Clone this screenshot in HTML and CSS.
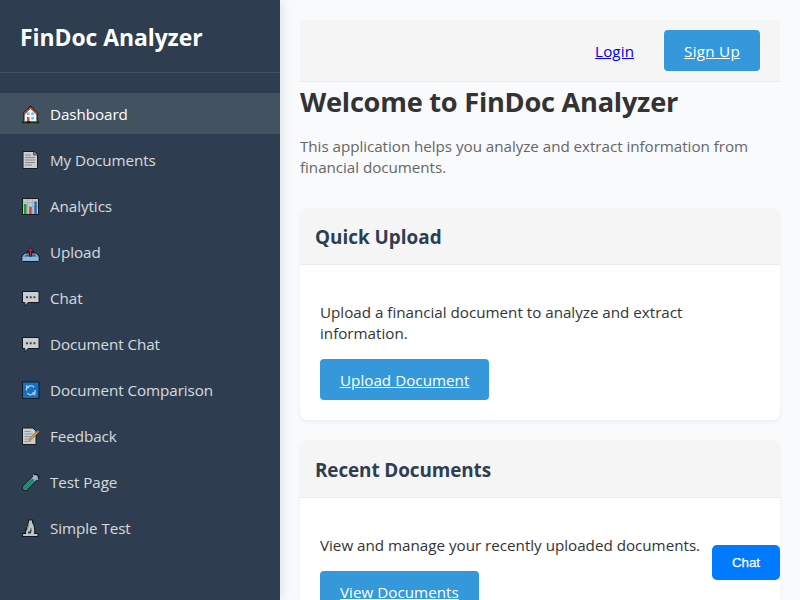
FILE: index.html
```html
<!DOCTYPE html>
<html lang="en">
<head>
<meta charset="utf-8">
<title>FinDoc Analyzer</title>
<link rel="stylesheet" href="styles.css">
</head>
<body>
<div class="layout">
  <aside class="sidebar">
    <div class="brand">FinDoc Analyzer</div>
    <nav class="nav">
      <a class="nav-item active">
        <svg class="icon" viewBox="0 0 20 21"><path d="M4 10h13v9H4z" fill="#f4f4f4" stroke="#111" stroke-width="1"/><path d="M3 11.500 10.500 4l7.500 7.500" fill="#f4f4f4" stroke="#111" stroke-width="2.200"/><path d="M3.600 11 10.500 4.500 17.400 11" fill="none" stroke="#e2502f" stroke-width="1.100"/><path d="M7 9.500h2.500V12H7zM11.300 9.500h2.500V12h-2.500zM11.300 14h2.500v2.500h-2.500z" fill="#4cc8f5"/><path d="M7 14h2.500v5H7z" fill="#e8452c"/><path d="M2 18.200h17v2H2z" fill="#111"/><path d="M3.500 18h3.300v1.200H3.500zM10 18h7.500v1.200H10z" fill="#1fa32a"/></svg>
        <span>Dashboard</span></a>
      <a class="nav-item">
        <svg class="icon" viewBox="0 0 20 21"><path d="M3 2.500h11l3.500 3v14H3z" fill="#f2f2f2" stroke="#111"/><path d="M13.500 3v3h3.500" fill="#999" stroke="#444" stroke-width=".8"/><path d="M5 6h6M5 8.500h10M5 11h10M5 13.500h10M5 16h7" stroke="#9a9a9a" stroke-width="1.100"/></svg>
        <span>My Documents</span></a>
      <a class="nav-item">
        <svg class="icon" viewBox="0 0 20 21"><path d="M2.500 3.500h16v16h-16z" fill="#e9e9ef" stroke="#111"/><path d="M3 7.500h15M3 11.500h15M7.500 4v15M12.500 4v15" stroke="#c2c2cc" stroke-width=".7"/><path d="M4 9h2.500v10H4z" fill="#1db427"/><path d="M9.200 12h2.500v7H9.200z" fill="#e8492e"/><path d="M14.300 6.500h2.500V19h-2.500z" fill="#1479d2"/></svg>
        <span>Analytics</span></a>
      <a class="nav-item">
        <svg class="icon" viewBox="0 0 20 21"><path d="M5 12h11l3 3v4.500l-1 1H3l-1-1V15z" fill="#8dc8f2" stroke="#111"/><path d="M2.600 16h15.800v3.800H2.600z" fill="#a9daf8"/><path d="M6 13.500h9l1.500 2h-12z" fill="#2c6fa8"/><path d="M10.500 15.500V9" stroke="#111" stroke-width="3"/><path d="M7 10.500 10.500 6.500 14 10.500z" fill="#d2223c" stroke="#111" stroke-width=".9"/><path d="M10.500 15V9" stroke="#d2223c" stroke-width="1.400"/></svg>
        <span>Upload</span></a>
      <a class="nav-item">
        <svg class="icon" viewBox="0 0 20 21"><path d="M2.500 4.500h16.500v11H8L4.800 19v-3.500H2.500z" fill="#f2f2f4" stroke="#111"/><path d="M6 9.200h2v2H6zM9.700 9.200h2v2h-2zM13.400 9.200h2v2h-2z" fill="#444"/></svg>
        <span>Chat</span></a>
      <a class="nav-item">
        <svg class="icon" viewBox="0 0 20 21"><path d="M2.500 4.500h16.500v11H8L4.800 19v-3.500H2.500z" fill="#f2f2f4" stroke="#111"/><path d="M6 9.200h2v2H6zM9.700 9.200h2v2h-2zM13.400 9.200h2v2h-2z" fill="#444"/></svg>
        <span>Document Chat</span></a>
      <a class="nav-item">
        <svg class="icon" viewBox="0 0 20 21"><path d="M2.500 3h16.500v16.500H2.500z" fill="#0a7fe0" stroke="#111"/><path d="M6.300 11.500a4.500 4.500 0 0 1 7.800-3.300M15.200 11a4.500 4.500 0 0 1-7.800 3.300" fill="none" stroke="#d9ecfb" stroke-width="1.300"/><path d="M6.600 6v2.600h2.600M14.900 16.500v-2.600h-2.600" fill="none" stroke="#d9ecfb" stroke-width="1.200"/></svg>
        <span>Document Comparison</span></a>
      <a class="nav-item">
        <svg class="icon" viewBox="0 0 20 21"><path d="M2.500 3h10.500l3 3v13.500H2.500z" fill="#f2f2f2" stroke="#111"/><path d="M4.500 6.500h6M4.500 9h8M4.500 11.500h6M4.500 14h4M4.500 16.500h6" stroke="#a8a8a8"/><path d="M18 6.500 9.300 15.200" stroke="#6b4a12" stroke-width="2.400"/><path d="M17.400 7.100 9.500 15" stroke="#f5bd3d" stroke-width="1.800"/><path d="M18.700 5.800 17.300 7.200" stroke="#d67272" stroke-width="2.400"/><path d="m7.800 16.800.8-2.500 1.700 1.700z" fill="#e2c18c"/></svg>
        <span>Feedback</span></a>
      <a class="nav-item">
        <svg class="icon" viewBox="0 0 20 21"><path d="M16 6 5.200 16.800" stroke="#111" stroke-width="6.400" stroke-linecap="round"/><path d="M12.300 3.200 18.800 9.700" stroke="#111" stroke-width="2.200"/><path d="M15.600 6.400 5.300 16.700" stroke="#b4d8f2" stroke-width="4.600" stroke-linecap="round"/><path d="M12 10 5.300 16.700" stroke="#14a184" stroke-width="4.600" stroke-linecap="round"/><path d="m12.800 3.700 5.500 5.500" stroke="#b4d8f2" stroke-width="1.200"/></svg>
        <span>Test Page</span></a>
      <a class="nav-item">
        <svg class="icon" viewBox="0 0 20 21"><path d="M8.500 5V3h4v2.500c2 2.500 2.500 6 2.200 11h3.300v3H2.500v-3h3V13h1z" fill="#e6e6e8" stroke="#111" stroke-width="1.100"/><path d="M11 10.500c.8 2 .6 4-.2 6H8V14.500h1.800z" fill="#2d3440"/><path d="M7.500 11.500 9 6" stroke="#999" stroke-width="1.200"/></svg>
        <span>Simple Test</span></a>
    </nav>
  </aside>
  <main class="main">
    <header class="topbar">
      <a class="login" href="#">Login</a>
      <a class="btn" href="#">Sign Up</a>
    </header>
    <h1>Welcome to FinDoc Analyzer</h1>
    <p class="lead">This application helps you analyze and extract information from financial documents.</p>
    <section class="card">
      <h3 class="card-head">Quick Upload</h3>
      <div class="card-body">
        <p>Upload a financial document to analyze and extract information.</p>
        <a class="btn" href="#">Upload Document</a>
      </div>
    </section>
    <section class="card">
      <h3 class="card-head recent">Recent Documents</h3>
      <div class="card-body">
        <p>View and manage your recently uploaded documents.</p>
        <a class="btn" href="#">View Documents</a>
      </div>
    </section>
  </main>
</div>
<button class="chat-btn">Chat</button>
</body>
</html>
```
FILE: styles.css
```css
* { box-sizing: border-box; }
body { margin: 0; height: 600px; overflow: hidden; background: #f8fafc; color: #333; font: 15.2px/21px "Open Sans", sans-serif; }
.layout { display: flex; height: 600px; overflow: hidden; }
.sidebar { flex: none; width: 280px; height: 600px; background: #2e3e50; box-shadow: 2px 0 10px rgba(0,0,0,.1); }
.brand { height: 73px; padding: 0 20px; border-bottom: 1px solid rgba(255,255,255,.1); color: #fff; font-size: 22.9px; font-weight: 700; line-height: 76px; letter-spacing: -.04px; }
.nav { display: flex; flex-direction: column; gap: 5px; padding-top: 20px; }
.nav-item { display: flex; gap: 10px; height: 41px; padding: 10px 20px; color: #fff; opacity: .8; white-space: nowrap; letter-spacing: -.06px; }
.nav-item span { line-height: 23px; }
.nav-item.active { background: #435261; opacity: 1; }
.icon { flex: none; width: 20px; height: 21px; }
.main { flex: 1; min-width: 0; padding: 20px; }
.topbar { display: flex; justify-content: flex-end; align-items: center; gap: 30px; height: 62px; padding: 10px 20px; background: #f5f5f5; border-bottom: 1px solid #e9ecef; }
.login { color: #0000ee; letter-spacing: .1px; line-height: 23px; padding-top: 1px; }
.topbar .btn { letter-spacing: .27px; }
.btn { display: inline-block; height: 41px; padding: 11px 20px 9px; border-radius: 4px; background: #3498db; color: #fff; }
h1 { margin: 0; font-size: 27.2px; line-height: 40px; letter-spacing: -.25px; white-space: nowrap; }
.lead { margin: 14px 0 30px; color: #666; letter-spacing: -.04px; }
.card { margin-bottom: 20px; border-radius: 8px; background: #fff; overflow: hidden; box-shadow: 0 2px 4px rgba(0,0,0,.05); }
.card-head { height: 57px; margin: 0; padding: 0 15px; background: #f5f5f5; border-bottom: 1px solid #e9ecef; color: #2c3e50; font-size: 18.9px; line-height: 58px; }
.recent { height: 58px; line-height: 60px; letter-spacing: -.1px; }
.card-body { padding: 37px 20px 20px; }
.card-body p { margin: 0 0 15px; letter-spacing: -.01px; }
.card-body .btn { vertical-align: top; letter-spacing: .02px; }
.chat-btn { position: fixed; right: 20px; bottom: 20px; width: 68px; height: 35px; padding: 0; border: 0; border-radius: 5px; background: #007bff; color: #fff; font: 13.333px "Liberation Sans", sans-serif; -webkit-text-stroke: .25px #fff; }
```
